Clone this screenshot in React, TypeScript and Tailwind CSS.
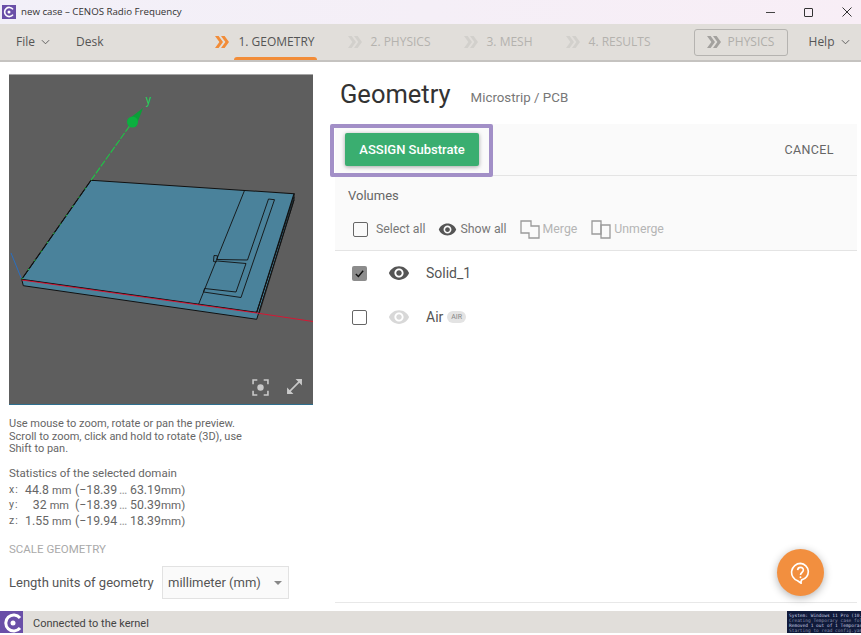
import React from 'react';

const EYE =
  'M12 4.5C7 4.5 2.73 7.61 1 12c1.73 4.39 6 7.5 11 7.5s9.27-3.11 11-7.5c-1.73-4.39-6-7.5-11-7.5zM12 17c-2.76 0-5-2.24-5-5s2.24-5 5-5 5 2.24 5 5-2.24 5-5 5zm0-8c-1.66 0-3 1.34-3 3s1.34 3 3 3 3-1.34 3-3-1.34-3-3-3z';

function Eye({ className }: { className: string }) {
  return (
    <svg viewBox="0 0 24 24" className={className} fill="currentColor">
      <path d={EYE} />
    </svg>
  );
}

function Chevrons({ className }: { className: string }) {
  return (
    <svg viewBox="0 0 14 12" className={className} fill="currentColor">
      <path d="M0 0h3.6L8 6l-4.4 6H0l4.4-6z" />
      <path d="M6 0h3.6L14 6l-4.4 6H6l4.4-6z" />
    </svg>
  );
}

function Caret({ className }: { className: string }) {
  return (
    <svg viewBox="0 0 10 6" className={className} fill="none" stroke="currentColor" strokeWidth="1">
      <path d="M1 1l4 4 4-4" />
    </svg>
  );
}

function MergeIcon({ split }: { split?: boolean }) {
  return (
    <svg viewBox="0 0 20 20" className="w-[20px] h-[20px] text-[#9a9a9a]" fill="none" stroke="currentColor" strokeWidth="1.3">
      {split ? (
        <>
          <path d="M1 2h9v13H1z" />
          <path d="M10 6h9v13h-9z" />
        </>
      ) : (
        <path d="M1 2h10v5h8v12H9v-5H1z" />
      )}
    </svg>
  );
}

function Step({ label, active }: { label: string; active?: boolean }) {
  return (
    <div className="relative h-full flex items-center gap-[9px] px-[2px]">
      <Chevrons className={active ? 'w-[14px] h-[12px] text-[#f28c38]' : 'w-[14px] h-[12px] text-[#d2d0cc]'} />
      <span className={active ? 'text-[12px] text-[#555]' : 'text-[12px] text-[#b4b2ae]'}>{label}</span>
      {active && <div className="absolute bottom-0 left-[21px] right-0 h-[3px] rounded-t-[3px] bg-[#f28c38]" />}
    </div>
  );
}

function Preview() {
  return (
    <div className="relative w-[304px] h-[331px] bg-[#5e5e5e] border-t border-t-[#a5a5a5] border-b border-b-[#2e6f8e]">
      <svg viewBox="9 75 304 329" className="w-[304px] h-[329px]" fill="none">
        <path d="M21.7 279.3L11 253" stroke="#2a6fc0" strokeWidth="1" />
        <path d="M21.7 279.3L23.3 285.7L256.7 319.3L294 200V193.7L256.7 312.3z" fill="#4a8199" stroke="#111" strokeWidth="1" />
        <path d="M91 180.3L294 193.7L256.7 312.3L21.7 279.3z" fill="#4a829b" stroke="#111" strokeWidth="1.1" />
        <path d="M256.7 312.3L294 197M259 314L294 200" stroke="#111" strokeWidth="0.8" />
        <path d="M244.3 191L198.3 305" stroke="#111" strokeWidth="0.9" />
        <path d="M268.5 199L274.5 199.7L241 297.5L203.5 292L204.5 288.5L236 292L246 263.5L217.5 261L216 262L213.5 261.5L214 255.5L217.5 255.8L217 259.5L247.5 260L268.5 199z" stroke="#111" strokeWidth="0.9" />
        <path d="M21.7 280L256.7 313L313 321.5" stroke="#e3102f" strokeWidth="0.9" />
        <path d="M21.7 279.3L91 180.3" stroke="#111" strokeWidth="1" />
        <path d="M21.7 279.3L91 180.3" stroke="#1ad045" strokeWidth="1" strokeDasharray="2 9" />
        <path d="M91 180.3L131 124" stroke="#1cc845" strokeWidth="1.1" strokeDasharray="7 1.5" />
        <path d="M143 108L127.5 120C127.5 126 132 128 136 126.5z" fill="#0a9e38" />
        <ellipse cx="132.5" cy="122" rx="5.5" ry="5.5" fill="#0bb03f" />
        <text x="145.5" y="104" fill="#24d05a" fontSize="12" fontFamily="Roboto, sans-serif">y</text>
      </svg>
      {/* view controls */}
      <svg viewBox="0 0 16 16" className="absolute left-[243px] top-[304px] w-[17px] h-[17px] text-[#c9c9c9]" fill="none" stroke="currentColor" strokeWidth="1.5">
        <path d="M1 5V1h4M11 1h4v4M15 11v4h-4M5 15H1v-4" />
        <circle cx="8" cy="8" r="3" fill="currentColor" stroke="none" />
      </svg>
      <svg viewBox="0 0 16 16" className="absolute left-[277px] top-[303px] w-[17px] h-[17px] text-[#c9c9c9]" fill="none" stroke="currentColor" strokeWidth="1.5">
        <path d="M1.5 14.5L14.5 1.5" />
        <path d="M9 1h6v6L9 1zM1 9v6h6L1 9z" fill="currentColor" stroke="none" />
      </svg>
    </div>
  );
}

const stats = [
  { axis: 'x:', size: '44.8', range: '(−18.39', to: '63.19' },
  { axis: 'y:', size: '32', range: '(−18.39', to: '50.39' },
  { axis: 'z:', size: '1.55', range: '(−19.94', to: '18.39' },
];

export default function App() {
  return (
    <div className="relative w-[861px] h-[635px] bg-white flex flex-col overflow-hidden font-['Roboto',sans-serif]">
      {/* window title bar */}
      <div className="h-[24px] shrink-0 flex items-center bg-gradient-to-r from-[#f2f0f8] to-[#f8eef6] font-['Open_Sans',sans-serif]">
        <div className="ml-[2px] w-[14px] h-[14px] bg-[#6a4fa8] flex items-center justify-center">
          <svg viewBox="0 0 12 12" className="w-[12px] h-[12px]" fill="none" stroke="#fff" strokeWidth="1.6">
            <path d="M10 3.4a4.6 4.6 0 1 0 0 5.2" />
            <circle cx="6" cy="6" r="1.5" fill="#fff" stroke="none" />
          </svg>
        </div>
        <span className="ml-[5px] text-[9.7px] text-[#333]">new case – CENOS Radio Frequency</span>
        <div className="ml-auto mr-[9px] flex items-center gap-[29px]">
          <div className="w-[9px] h-px bg-[#444]" />
          <div className="w-[9px] h-[9px] border border-[#333] rounded-[1px]" />
          <svg viewBox="0 0 10 10" className="w-[10px] h-[10px]" stroke="#333" strokeWidth="1">
            <path d="M0.5 0.5l9 9M9.5 0.5l-9 9" />
          </svg>
        </div>
      </div>

      {/* app toolbar */}
      <div className="h-[38px] shrink-0 flex items-center bg-[#e1deda] border-b-2 border-b-[#c5c3c0] font-['Open_Sans',sans-serif]">
        <div className="ml-[16px] w-[36px] flex items-center gap-[6px] text-[12px] text-[#555]">
          File
          <Caret className="w-[9px] h-[6px] shrink-0" />
        </div>
        <span className="ml-[24px] text-[12px] text-[#555]">Desk</span>
        <div className="ml-[110px] h-full flex items-center gap-[29px]">
          <Step label="1. GEOMETRY" active />
          <Step label="2. PHYSICS" />
          <Step label="3. MESH" />
          <Step label="4. RESULTS" />
        </div>
        <div className="ml-[41px] w-[94px] h-[27px] rounded-[3px] border border-[#b5b3b0] flex items-center justify-center gap-[7px]">
          <Chevrons className="w-[14px] h-[12px] text-[#a3a19e]" />
          <span className="text-[12px] text-[#b0aeaa]">PHYSICS</span>
        </div>
        <div className="ml-[21px] flex items-center gap-[6px] text-[12px] text-[#555]">
          Help
          <Caret className="w-[9px] h-[6px]" />
        </div>
      </div>

      <div className="flex-1 min-h-0 flex">
        {/* left column */}
        <div className="w-[335px] shrink-0 pl-[9px] pt-[12px] text-[#666]">
          <Preview />
          <p className="mt-[13px] w-[240px] text-[11px] leading-[12.5px]">
            Use mouse to zoom, rotate or pan the preview. Scroll to zoom, click and hold to rotate (3D), use Shift to pan.
          </p>
          <p className="mt-[10px] text-[11.5px] leading-[14px]">Statistics of the selected domain</p>
          <div className="mt-[3px] grid grid-cols-[16px_44px_47px_14px_31px_auto] justify-start text-[12.3px] leading-[14.5px] whitespace-nowrap">
            {stats.map((s) => (
              <React.Fragment key={s.axis}>
                <span className="text-[10.5px] tracking-[1px]">{s.axis}</span>
                <span className="text-right">
                  {s.size} <span className="text-[11px]">mm</span>
                </span>
                <span className="pl-[6px]">{s.range}</span>
                <span className="text-center text-[#999]">…</span>
                <span>{s.to}</span>
                <span className="text-[11.5px]">mm)</span>
              </React.Fragment>
            ))}
          </div>
          <p className="mt-[13px] text-[11.5px] leading-[14px] text-[#aaa]">SCALE GEOMETRY</p>
          <div className="mt-[10px] flex items-center">
            <span className="w-[153px] text-[13px] text-[#555] whitespace-nowrap">Length units of geometry</span>
            <div className="w-[127px] h-[33px] flex items-center bg-[#fafafa] border border-[#e2e2e2] pl-[5px] text-[13px] text-[#555] whitespace-nowrap">
              millimeter (mm)
              <div className="ml-auto mr-[6px] w-0 h-0 border-x-[4px] border-x-transparent border-t-[4px] border-t-[#888]" />
            </div>
          </div>
        </div>

        {/* right column */}
        <div className="flex-1 min-w-0 flex flex-col pr-[4px]">
          <div className="h-[62px] shrink-0 flex items-center pl-[5px] pt-[4px]">
            <h1 className="text-[25.5px] leading-none font-normal text-[#333]">Geometry</h1>
            <span className="ml-[20px] mt-[5px] text-[13.3px] text-[#777]">Microstrip / PCB</span>
          </div>
          <div className="h-[52px] shrink-0 flex items-center justify-between bg-[#fafafa] border-b border-b-[#e4e4e4] pl-[10px] pr-[23px]">
            <button className="w-[134px] h-[33px] rounded-[2px] bg-[#3aae70] text-white text-[13px] font-medium shadow-[0_1px_4px_rgba(0,0,0,0.35)]">
              ASSIGN Substrate
            </button>
            <span className="mt-[2px] text-[12.5px] tracking-[0.4px] text-[#666]">CANCEL</span>
          </div>
          <div className="h-[75px] shrink-0 bg-[#fafafa] border-b border-b-[#e4e4e4] pl-[13px]">
            <p className="pt-[12px] text-[13px] leading-[16px] text-[#666]">Volumes</p>
            <div className="mt-[15px] flex items-center text-[12.3px] text-[#777]">
              <div className="ml-[5px] w-[15px] h-[15px] border border-[#666] rounded-[2px]" />
              <span className="ml-[8px]">Select all</span>
              <Eye className="ml-[12px] w-[19px] h-[19px] text-[#555]" />
              <span className="ml-[4px]">Show all</span>
              <div className="ml-[13px]"><MergeIcon /></div>
              <span className="ml-[3px] text-[#b5b5b5]">Merge</span>
              <div className="ml-[14px]"><MergeIcon split /></div>
              <span className="ml-[3px] text-[#b5b5b5]">Unmerge</span>
            </div>
          </div>
          <div className="h-[44px] shrink-0 flex items-center pl-[17px]">
            <div className="w-[15px] h-[15px] rounded-[2px] bg-[#8c8c8c] flex items-center justify-center">
              <svg viewBox="0 0 12 12" className="w-[11px] h-[11px]" fill="none" stroke="#111" strokeWidth="1.5">
                <path d="M2 6.5l2.8 2.8L10 3" />
              </svg>
            </div>
            <Eye className="ml-[21px] w-[22px] h-[22px] text-[#555]" />
            <span className="ml-[16px] text-[14px] text-[#555]">Solid_1</span>
          </div>
          <div className="h-[44px] shrink-0 flex items-center pl-[17px]">
            <div className="w-[15px] h-[15px] rounded-[2px] border border-[#666]" />
            <Eye className="ml-[21px] w-[22px] h-[22px] text-[#d8d8d8]" />
            <span className="ml-[16px] text-[14px] text-[#555]">Air</span>
            <span className="ml-[4px] h-[12px] px-[4px] rounded-full bg-[#e3e3e3] text-[7px] leading-[12px] text-[#888]">AIR</span>
          </div>
          <div className="mt-auto mb-[8px] border-b border-b-[#e8e8e8]" />
        </div>
      </div>

      {/* status bar */}
      <div className="h-[22px] shrink-0 mb-[2px] flex items-center bg-[#e1deda] overflow-hidden">
        <div className="w-[23px] h-[22px] bg-[#6a4fa8] flex items-center justify-center overflow-hidden">
          <svg viewBox="0 0 22 22" className="w-[22px] h-[22px] shrink-0" fill="none" stroke="#fff" strokeWidth="3">
            <path d="M19 7a8 8 0 1 0 0 10" />
            <circle cx="12" cy="12" r="2.5" fill="#fff" stroke="none" />
          </svg>
        </div>
        <span className="ml-[10px] mt-[5px] text-[11px] text-[#444]">Connected to the kernel</span>
        <div className="ml-auto w-[74px] h-[22px] bg-[#101a3a] pl-[2px] pt-[2px] overflow-hidden font-['DejaVu_Sans_Mono',monospace] text-[4.5px] leading-[5px] whitespace-nowrap text-[#c9cde0]">
          <div>System: Windows 11 Pro (10.0</div>
          <div className="text-[#8b91ad]">Creating Temporary case fold</div>
          <div>Removed 1 out of 1 Temporary</div>
          <div className="text-[#8b91ad]">Starting to read config.yaml</div>
        </div>
      </div>

      {/* highlight round the assign button */}
      <div className="absolute left-[330px] top-[124px] w-[163px] h-[53px] rounded-[2px] border-4 border-[#a28fc7] pointer-events-none" />

      {/* help button */}
      <div className="absolute left-[777px] top-[549px] w-[47px] h-[47px] rounded-full bg-[#f28f3f] shadow-[0_2px_8px_rgba(0,0,0,0.3)] flex items-center justify-center">
        <svg viewBox="0 0 24 24" className="w-[23px] h-[23px]" fill="none" stroke="#fff" strokeWidth="1.7">
          <path d="M12 2.5a9.3 9.3 0 0 0-3 18.1l3.6 2.6v-1.8l.6-1.7A8.7 8.7 0 0 0 12 2.5z" />
          <path d="M9 9.5c.3-4 6.2-3.6 6 0 0 2.5-3 2.5-3 5" />
          <circle cx="12" cy="17" r="1" fill="#fff" stroke="none" />
        </svg>
      </div>
    </div>
  );
}
